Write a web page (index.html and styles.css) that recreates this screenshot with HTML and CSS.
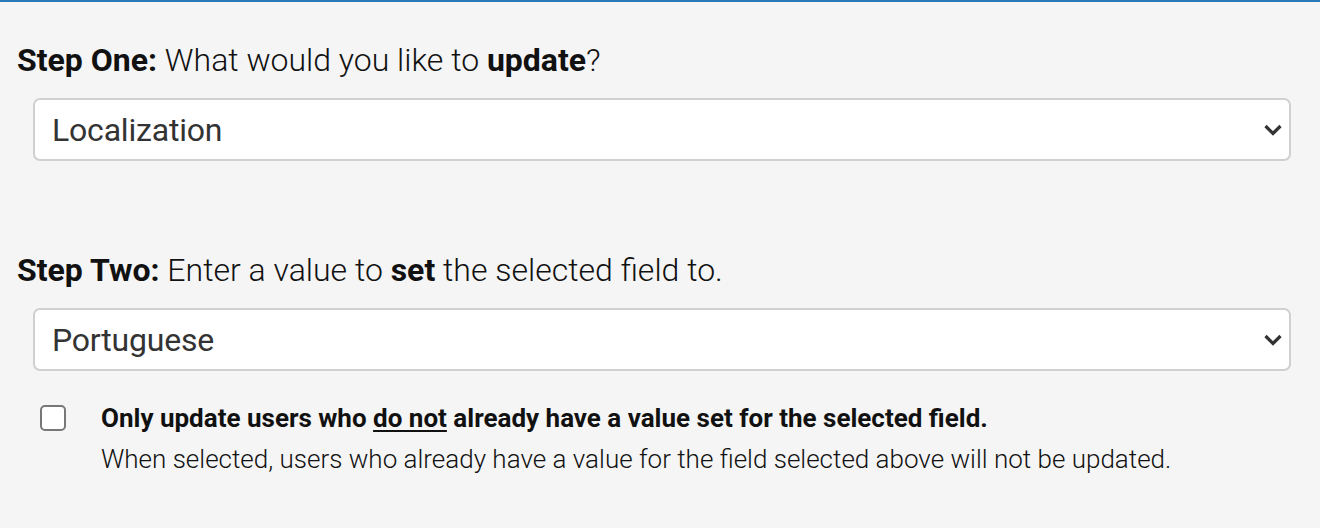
FILE: index.html
```html
<!DOCTYPE html>
<html lang="en">
<head>
<meta charset="utf-8">
<title>Bulk update</title>
<link rel="stylesheet" href="styles.css">
</head>
<body>
<div class="panel">
  <section class="step">
    <h2 class="step-title"><strong>Step One:</strong> What would you like to <strong>update</strong>?</h2>
    <div class="select">
      <span class="select-value">Localization</span>
      <svg class="chevron" viewBox="0 0 18 12" width="18" height="12"><path d="M1.5 2 L9 9.5 L16.5 2" fill="none" stroke="#333" stroke-width="3.2"/></svg>
    </div>
  </section>
  <section class="step step-two">
    <h2 class="step-title"><strong>Step Two:</strong> Enter a value to <strong>set</strong> the selected field to.</h2>
    <div class="select">
      <span class="select-value">Portuguese</span>
      <svg class="chevron" viewBox="0 0 18 12" width="18" height="12"><path d="M1.5 2 L9 9.5 L16.5 2" fill="none" stroke="#333" stroke-width="3.2"/></svg>
    </div>
    <div class="option">
      <span class="checkbox"></span>
      <div class="option-text">
        <div class="option-label">Only update users who <u>do not</u> already have a value set for the selected field.</div>
        <div class="option-help">When selected, users who already have a value for the field selected above will not be updated.</div>
      </div>
    </div>
  </section>
</div>
</body>
</html>
```
FILE: styles.css
```css
html, body {
  margin: 0;
  padding: 0;
}
body {
  background: #f5f5f5;
  font-family: Roboto, "Liberation Sans", sans-serif;
  color: #111;
  width: 1320px;
  height: 528px;
  overflow: hidden;
}
.panel {
  border-top: 2px solid #2a79b8;
  padding: 40px 29px 0 17px;
}
.step-title {
  margin: 0;
  font-size: 32px;
  font-weight: 300;
  line-height: 36px;
  color: #111;
}
.step-title strong {
  font-weight: 700;
}
.select {
  margin: 20px 0 0 16px;
  height: 59px;
  background: #fff;
  border: 2px solid #d0d0d0;
  border-radius: 7px;
  display: flex;
  align-items: center;
  justify-content: space-between;
  padding: 0 7px 0 17px;
}
.select-value {
  font-size: 32px;
  color: #333;
  font-weight: 400;
  letter-spacing: -0.2px;
}
.chevron {
  display: block;
}
.step-two {
  margin-top: 91px;
}
.option {
  display: flex;
  align-items: flex-start;
  margin: 34px 0 0 23px;
  gap: 35px;
}
.checkbox {
  flex: none;
  width: 22px;
  height: 22px;
  border: 2px solid #777;
  border-radius: 5px;
  background: #fff;
}
.option-label {
  font-size: 26px;
  font-weight: 700;
  line-height: 28px;
  color: #111;
  margin-top: -1px;
}
.option-label u {
  text-underline-offset: 3px;
}
.option-help {
  font-size: 26px;
  font-weight: 300;
  line-height: 28px;
  margin-top: 13px;
  color: #111;
}
```
